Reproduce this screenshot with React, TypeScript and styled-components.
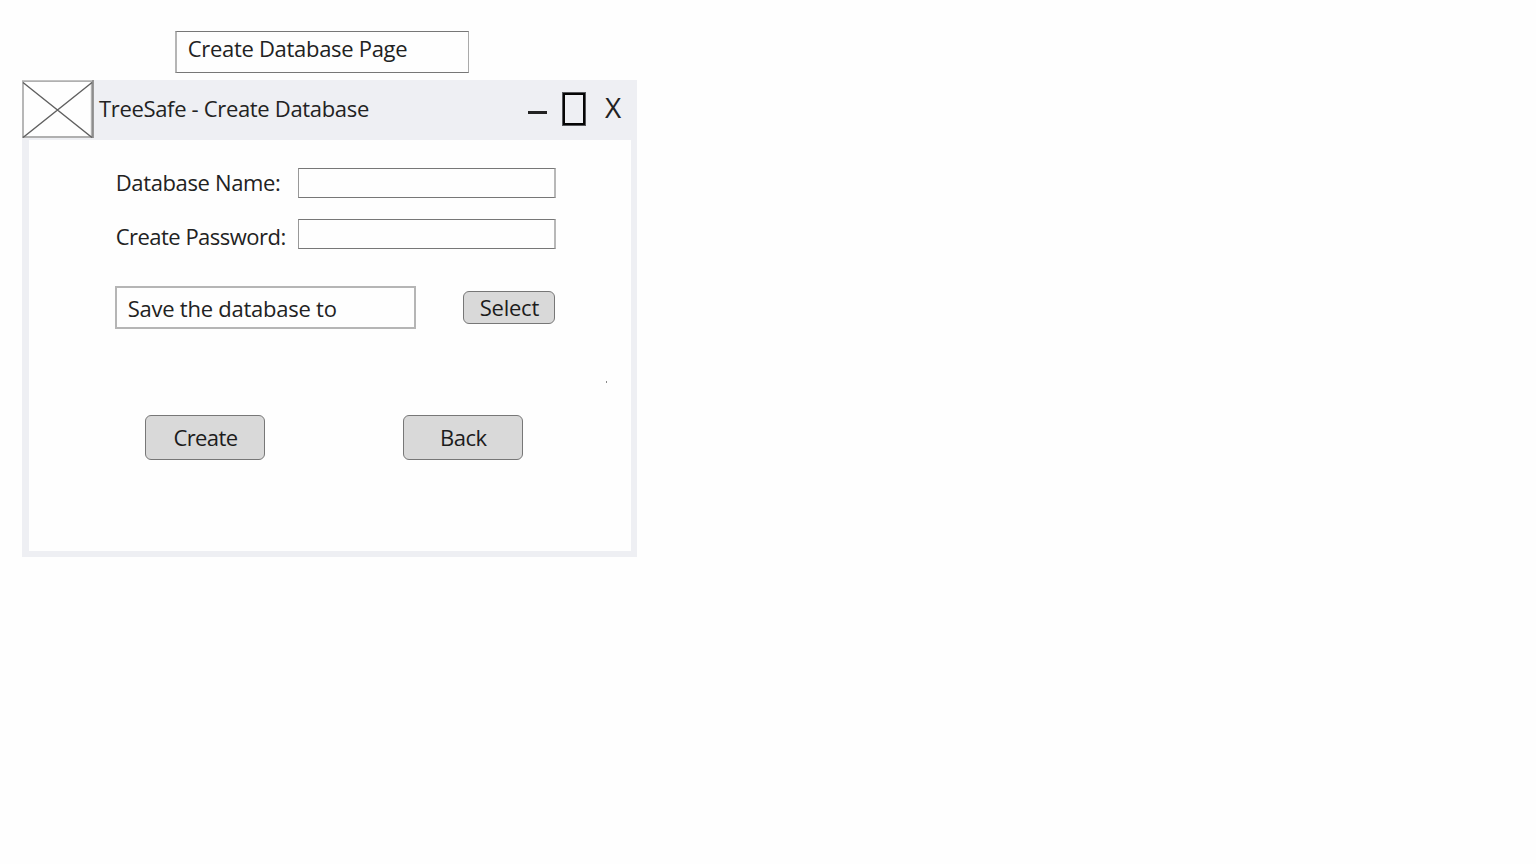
import React from "react";
import styled, { createGlobalStyle } from "styled-components";

const GlobalStyle = createGlobalStyle`
  * { box-sizing: border-box; }
  body {
    margin: 0;
    background: #fefefe;
    color: #222;
    font-family: "Open Sans", "Noto Sans", sans-serif;
    font-size: 22px;
    line-height: 30px;
  }
`;

const Page = styled.main`
  width: 1536px;
  height: 864px;
  padding: 31px 0 0 22px;
  background: #fefefe;
  overflow: hidden;
`;

const Text = styled.span<{ $spacing?: number }>`
  display: block;
  white-space: nowrap;
  letter-spacing: ${(p) => p.$spacing ?? 0}px;
`;

const Caption = styled.header`
  width: 294px;
  height: 42px;
  margin-left: 153px;
  padding: 1px 0 0 10.7px;
  border: 1px solid #777;
  border-left: 2px solid #b5b5b5;
  border-right-color: #aaa;
`;

const Window = styled.section`
  width: 615px;
  height: 477px;
  margin-top: 7px;
  display: flex;
  flex-direction: column;
  background: #eeeff3;
`;

const TitleBar = styled.div`
  height: 60px;
  display: flex;
  align-items: flex-start;
`;

const WindowTitle = styled.h1`
  flex: 1;
  margin: 13px 0 0 5px;
  font-size: inherit;
  font-weight: 400;
`;

const Controls = styled.div`
  display: flex;
  align-items: flex-start;
  padding: 12px 14px 0 0;
`;

const Minimise = styled.span`
  width: 19px;
  height: 3px;
  margin: 19px 15px 0 0;
  background: #222;
`;

const Maximise = styled.span`
  width: 24px;
  height: 34px;
  margin-right: 19px;
  border: 3px solid #050505;
  outline: 1px solid #55565a;
  outline-offset: -1px;
`;

const Close = styled.span`
  width: 18px;
  font: 400 28px/30px "Open Sans", sans-serif;
`;

const Body = styled.div`
  flex: 1;
  margin: 0 6px 6px 7px;
  padding: 28px 0 0 86px;
  background: #fefefe;
`;

const Field = styled.label<{ $drop: number; $after: number }>`
  display: grid;
  grid-template-columns: 183px 258px;
  height: 30px;
  margin-bottom: ${(p) => p.$after}px;
  > span { margin: ${(p) => p.$drop}px 0 0 0.7px; }
`;

const Input = styled.input`
  width: 258px;
  height: 30px;
  padding: 0 8px;
  border: 1px solid #777;
  border-left-color: #999;
  border-right: 2px solid #b8b8b8;
  border-radius: 0;
  background: #fefefe;
  font: inherit;
  outline: none;
`;

const SaveRow = styled.div`
  display: flex;
  align-items: flex-start;
  height: 43px;
`;

const Location = styled.div`
  width: 301px;
  height: 43px;
  margin-right: 47.4px;
  padding: 5px 0 0 10.7px;
  border: 2px solid #b5b5b5;
`;

const Button = styled.button<{ $w: number; $h: number }>`
  display: flex;
  justify-content: center;
  align-items: center;
  width: ${(p) => p.$w}px;
  height: ${(p) => p.$h}px;
  padding: 0 0 1px;
  border: 1px solid #777;
  border-radius: 6px;
  background: #d9d9d9;
  color: #1c1c1c;
  font: inherit;
`;

const SelectSlot = styled.div`
  padding-top: 5px;
  ${Button} { padding-bottom: 2px; }
`;

const Speck = styled.div`
  width: 1px;
  height: 2px;
  margin: 52px 0 0 491px;
  background: #888;
`;

const Actions = styled.div`
  display: flex;
  gap: 138px;
  margin: 32px 0 0 30.4px;
`;

const Placeholder = () => (
  <svg width="72" height="58" viewBox="0 0 72 58">
    <rect width="72" height="58" fill="#fefefe" />
    <path d="M0 1.2H70M0 57H70M1 1V58" stroke="#b0b0b0" strokeWidth="1.8" fill="none" />
    <path d="M69.6 1V58" stroke="#b0b0b0" strokeWidth="1.6" />
    <path d="M71 0V58" stroke="#6c6c6c" strokeWidth="1.4" />
    <path d="M1 2.5L70 57.5M1 57.5L70 2.5" stroke="#606060" strokeWidth="1.4" />
  </svg>
);

export default function App() {
  return (
    <>
      <GlobalStyle />
      <Page>
        <Caption>
          <Text $spacing={-0.3}>Create Database Page</Text>
        </Caption>
        <Window>
          <TitleBar>
            <Placeholder />
            <WindowTitle>
              <Text $spacing={-0.33}>TreeSafe - Create Database</Text>
            </WindowTitle>
            <Controls>
              <Minimise />
              <Maximise />
              <Close>X</Close>
            </Controls>
          </TitleBar>
          <Body>
            <Field $drop={-1} $after={21}>
              <Text $spacing={-0.36}>Database Name:</Text>
              <Input />
            </Field>
            <Field $drop={2} $after={37}>
              <Text $spacing={-0.52}>Create Password:</Text>
              <Input type="password" />
            </Field>
            <SaveRow>
              <Location>
                <Text $spacing={-0.24}>Save the database to</Text>
              </Location>
              <SelectSlot>
                <Button $w={92} $h={33}>
                  <Text $spacing={-0.25}>Select</Text>
                </Button>
              </SelectSlot>
            </SaveRow>
            <Speck />
            <Actions>
              <Button $w={120} $h={45}>
                <Text $spacing={-0.6}>Create</Text>
              </Button>
              <Button $w={120} $h={45}>
                <Text $spacing={-0.5}>Back</Text>
              </Button>
            </Actions>
          </Body>
        </Window>
      </Page>
    </>
  );
}
